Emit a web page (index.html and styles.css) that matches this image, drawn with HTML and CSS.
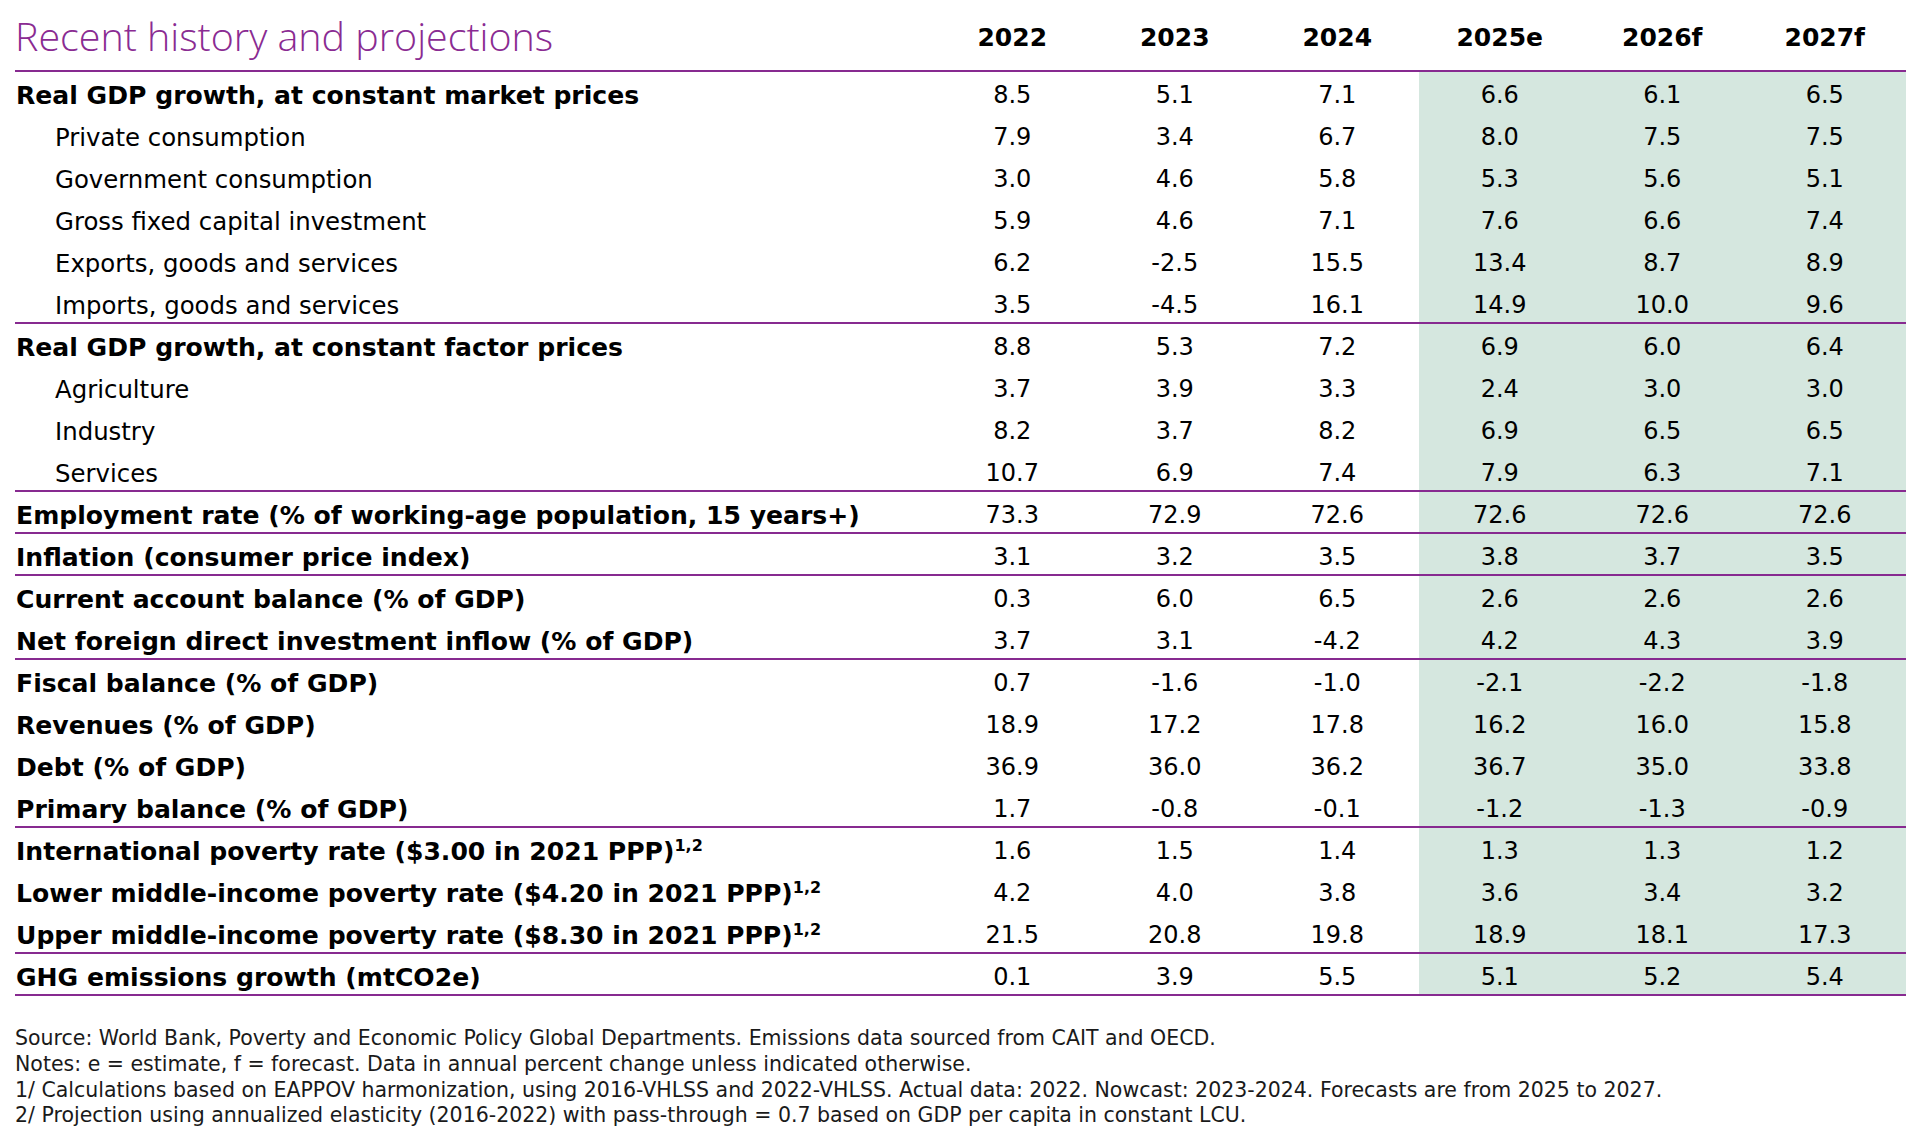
FILE: index.html
```html
<!DOCTYPE html>
<html lang="en">
<head>
<meta charset="utf-8">
<title>Recent history and projections</title>
<link rel="stylesheet" href="styles.css">
</head>
<body>
<div class="page">
  <div class="table">
    <div class="row head">
      <div class="title">Recent history and projections</div>
      <div class="yr">2022</div><div class="yr">2023</div><div class="yr">2024</div>
      <div class="yr">2025e</div><div class="yr">2026f</div><div class="yr">2027f</div>
    </div>

    <div class="row"><div class="lbl b">Real GDP growth, at constant market prices</div><div class="n">8.5</div><div class="n">5.1</div><div class="n">7.1</div><div class="n p">6.6</div><div class="n p">6.1</div><div class="n p">6.5</div></div>
    <div class="row"><div class="lbl s">Private consumption</div><div class="n">7.9</div><div class="n">3.4</div><div class="n">6.7</div><div class="n p">8.0</div><div class="n p">7.5</div><div class="n p">7.5</div></div>
    <div class="row"><div class="lbl s">Government consumption</div><div class="n">3.0</div><div class="n">4.6</div><div class="n">5.8</div><div class="n p">5.3</div><div class="n p">5.6</div><div class="n p">5.1</div></div>
    <div class="row"><div class="lbl s">Gross fixed capital investment</div><div class="n">5.9</div><div class="n">4.6</div><div class="n">7.1</div><div class="n p">7.6</div><div class="n p">6.6</div><div class="n p">7.4</div></div>
    <div class="row"><div class="lbl s">Exports, goods and services</div><div class="n">6.2</div><div class="n">-2.5</div><div class="n">15.5</div><div class="n p">13.4</div><div class="n p">8.7</div><div class="n p">8.9</div></div>
    <div class="row sep"><div class="lbl s">Imports, goods and services</div><div class="n">3.5</div><div class="n">-4.5</div><div class="n">16.1</div><div class="n p">14.9</div><div class="n p">10.0</div><div class="n p">9.6</div></div>

    <div class="row"><div class="lbl b">Real GDP growth, at constant factor prices</div><div class="n">8.8</div><div class="n">5.3</div><div class="n">7.2</div><div class="n p">6.9</div><div class="n p">6.0</div><div class="n p">6.4</div></div>
    <div class="row"><div class="lbl s">Agriculture</div><div class="n">3.7</div><div class="n">3.9</div><div class="n">3.3</div><div class="n p">2.4</div><div class="n p">3.0</div><div class="n p">3.0</div></div>
    <div class="row"><div class="lbl s">Industry</div><div class="n">8.2</div><div class="n">3.7</div><div class="n">8.2</div><div class="n p">6.9</div><div class="n p">6.5</div><div class="n p">6.5</div></div>
    <div class="row sep"><div class="lbl s">Services</div><div class="n">10.7</div><div class="n">6.9</div><div class="n">7.4</div><div class="n p">7.9</div><div class="n p">6.3</div><div class="n p">7.1</div></div>

    <div class="row sep"><div class="lbl b">Employment rate (% of working-age population, 15 years+)</div><div class="n">73.3</div><div class="n">72.9</div><div class="n">72.6</div><div class="n p">72.6</div><div class="n p">72.6</div><div class="n p">72.6</div></div>

    <div class="row sep"><div class="lbl b">Inflation (consumer price index)</div><div class="n">3.1</div><div class="n">3.2</div><div class="n">3.5</div><div class="n p">3.8</div><div class="n p">3.7</div><div class="n p">3.5</div></div>

    <div class="row"><div class="lbl b">Current account balance (% of GDP)</div><div class="n">0.3</div><div class="n">6.0</div><div class="n">6.5</div><div class="n p">2.6</div><div class="n p">2.6</div><div class="n p">2.6</div></div>
    <div class="row sep"><div class="lbl b">Net foreign direct investment inflow (% of GDP)</div><div class="n">3.7</div><div class="n">3.1</div><div class="n">-4.2</div><div class="n p">4.2</div><div class="n p">4.3</div><div class="n p">3.9</div></div>

    <div class="row"><div class="lbl b">Fiscal balance (% of GDP)</div><div class="n">0.7</div><div class="n">-1.6</div><div class="n">-1.0</div><div class="n p">-2.1</div><div class="n p">-2.2</div><div class="n p">-1.8</div></div>
    <div class="row"><div class="lbl b">Revenues (% of GDP)</div><div class="n">18.9</div><div class="n">17.2</div><div class="n">17.8</div><div class="n p">16.2</div><div class="n p">16.0</div><div class="n p">15.8</div></div>
    <div class="row"><div class="lbl b">Debt (% of GDP)</div><div class="n">36.9</div><div class="n">36.0</div><div class="n">36.2</div><div class="n p">36.7</div><div class="n p">35.0</div><div class="n p">33.8</div></div>
    <div class="row sep"><div class="lbl b">Primary balance (% of GDP)</div><div class="n">1.7</div><div class="n">-0.8</div><div class="n">-0.1</div><div class="n p">-1.2</div><div class="n p">-1.3</div><div class="n p">-0.9</div></div>

    <div class="row"><div class="lbl b">International poverty rate ($3.00 in 2021 PPP)<sup class="fn">1,2</sup></div><div class="n">1.6</div><div class="n">1.5</div><div class="n">1.4</div><div class="n p">1.3</div><div class="n p">1.3</div><div class="n p">1.2</div></div>
    <div class="row"><div class="lbl b">Lower middle-income poverty rate ($4.20 in 2021 PPP)<sup class="fn">1,2</sup></div><div class="n">4.2</div><div class="n">4.0</div><div class="n">3.8</div><div class="n p">3.6</div><div class="n p">3.4</div><div class="n p">3.2</div></div>
    <div class="row sep"><div class="lbl b">Upper middle-income poverty rate ($8.30 in 2021 PPP)<sup class="fn">1,2</sup></div><div class="n">21.5</div><div class="n">20.8</div><div class="n">19.8</div><div class="n p">18.9</div><div class="n p">18.1</div><div class="n p">17.3</div></div>

    <div class="row sep"><div class="lbl b">GHG emissions growth (mtCO2e)</div><div class="n">0.1</div><div class="n">3.9</div><div class="n">5.5</div><div class="n p">5.1</div><div class="n p">5.2</div><div class="n p">5.4</div></div>
  </div>

  <div class="notes">
    <p>Source: World Bank, Poverty and Economic Policy Global Departments. Emissions data sourced from CAIT and OECD.</p>
    <p>Notes: e = estimate, f = forecast. Data in annual percent change unless indicated otherwise.</p>
    <p>1/ Calculations based on EAPPOV harmonization, using 2016-VHLSS and 2022-VHLSS. Actual data: 2022. Nowcast: 2023-2024. Forecasts are from 2025 to 2027.</p>
    <p>2/ Projection using annualized elasticity (2016-2022) with pass-through = 0.7 based on GDP per capita in constant LCU.</p>
  </div>
</div>
</body>
</html>
```

FILE: styles.css
```css
html, body {
  margin: 0;
  padding: 0;
  background: #ffffff;
}

.page {
  padding: 0 0 0 15px;
  width: 1891px;
}

.table {
  display: flex;
  flex-direction: column;
  font-family: "DejaVu Sans", Verdana, sans-serif;
  color: #000;
}

.row {
  display: grid;
  grid-template-columns: 916px repeat(6, 162.5px);
  height: 42px;
  box-sizing: border-box;
}

.row.sep {
  border-bottom: 2px solid #872a90;
}

.row.head {
  height: 72px;
  border-bottom: 2px solid #872a90;
  align-items: center;
}

.title {
  font-family: "Open Sans", sans-serif;
  font-weight: 300;
  font-size: 39.4px;
  color: #8a2b92;
  line-height: 46px;
  padding-top: 1px;
  white-space: nowrap;
}

.yr {
  font-family: "DejaVu Sans", sans-serif;
  font-weight: bold;
  font-size: 25px;
  text-align: center;
  line-height: 36px;
  padding-top: 6px;
}

.lbl, .n {
  font-size: 24px;
  line-height: 33px;
  padding-top: 7px;
  white-space: nowrap;
}

.lbl {
  padding-left: 1px;
}

.lbl.b {
  font-weight: bold;
  font-size: 25.1px;
}

.lbl.s {
  padding-left: 40px;
  font-size: 24.4px;
}

.n {
  text-align: center;
}

.n.p {
  background: #d5e7df;
}

.fn {
  font-size: 16px;
  line-height: 0;
  vertical-align: 9px;
}

.notes {
  margin-top: 30px;
  font-family: "DejaVu Sans", Verdana, sans-serif;
  font-size: 20.5px;
  line-height: 25.8px;
  color: #1a1a1a;
}

.notes p {
  margin: 0;
}
```
